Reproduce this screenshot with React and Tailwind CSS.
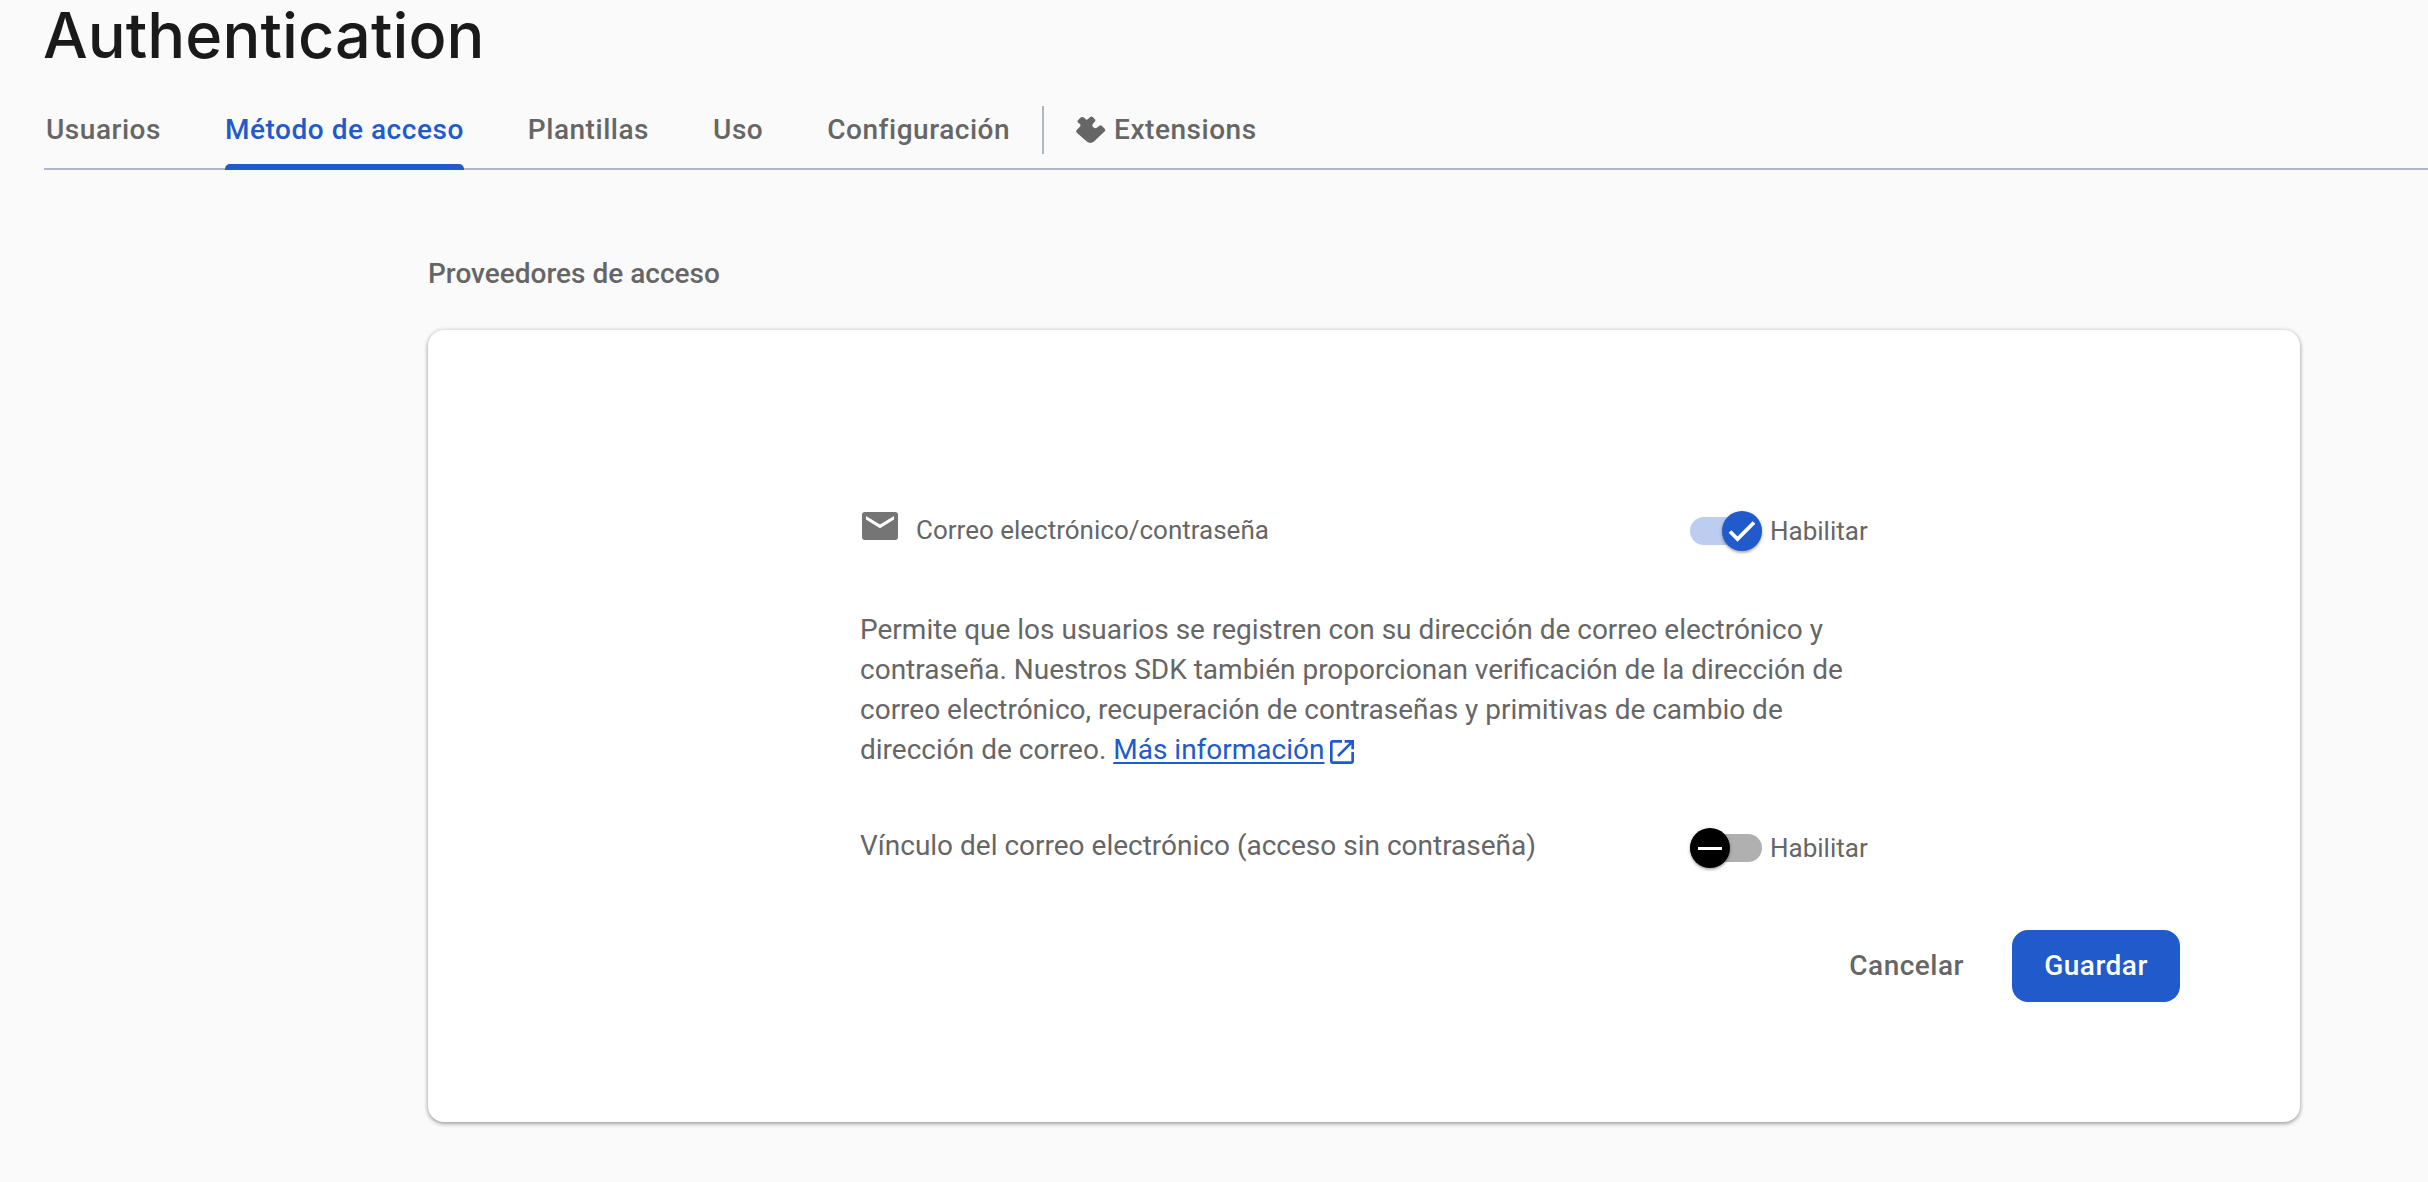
const tabs = ["Usuarios", "Método de acceso", "Plantillas", "Uso", "Configuración"];
const activeTab = "Método de acceso";

function ExtensionIcon() {
  return (
    <svg width="30" height="28" viewBox="0 0 30 28" fill="#666666" className="shrink-0" aria-hidden="true">
      <path d="M3.6 2.6 5.1 1.3Q6.6.6 7.9 1.6L10 3.6Q11 4 12 3.1L14.2.9Q15.4 0 16.6.9L18.9 3.2Q19.9 4.4 18.9 5.6L17.3 7.2Q15.8 9 16.6 10.6Q18.2 12.6 20.4 12L23.8 9.6Q25 9 26 9.9L28.7 12.7Q29.8 14 28.8 15.2L18 25.6Q14.5 28.4 10.8 25.6L.8 16.8Q-.4 15.2.8 13.8L3.4 11.2Q5.2 9.4 4.2 8.2L2 6.6Q1 5.6 1.8 4.4Z" />
    </svg>
  );
}

function MailIcon() {
  return (
    <svg width="36" height="28" viewBox="0 0 36 28" className="shrink-0" aria-hidden="true">
      <rect width="36" height="28" rx="3" fill="#757575" />
      <path d="M4 4v3.6l14 8.6 14-8.6V4l-14 8.4z" fill="#fff" />
    </svg>
  );
}

function OpenInNewIcon() {
  return (
    <svg width="32" height="32" viewBox="0 0 24 24" fill="#215acb" className="ml-0.5 inline-block align-[-9px]" aria-hidden="true">
      <path d="M5 21q-.82 0-1.41-.59T3 19V5q0-.82.59-1.41T5 3h7v2H5v14h14v-7h2v7q0 .82-.59 1.41T19 21Zm4.7-5.3-1.4-1.4L17.6 5H14V3h7v7h-2V6.4Z" />
    </svg>
  );
}

function Switch({ on }) {
  return (
    <div className="relative flex h-10 w-[72px] shrink-0 items-center">
      <div className={`h-7 w-full rounded-full ${on ? "bg-[#bccdef]" : "bg-[#b0b0b0]"}`} />
      <div
        className={`absolute top-0 flex size-10 items-center justify-center rounded-full shadow-[0_2px_2px_rgba(0,0,0,0.2),0_1px_4px_rgba(0,0,0,0.18)] ${
          on ? "right-0 bg-[#215acb]" : "left-0 bg-black"
        }`}
      >
        {on ? (
          <svg width="28" height="22" viewBox="0 0 28 22" fill="none" stroke="#fff" strokeWidth="3.8" aria-hidden="true">
            <path d="M2 11.5 9.5 19 26 2.5" />
          </svg>
        ) : (
          <div className="h-[3px] w-6 bg-white" />
        )}
      </div>
    </div>
  );
}

export default function App() {
  return (
    <div className="h-[1182px] w-[2428px] overflow-hidden bg-[#fafafa] font-[Roboto,sans-serif] text-[28px] text-[#666666]">
      <h1 className="pl-[43px] font-[Inter,sans-serif] text-[63px] leading-[70px] font-medium tracking-[0.1px] text-[#1a1a1a]">
        Authentication
      </h1>

      <nav className="mt-5 ml-11 flex h-20 items-center pl-0.5 font-medium tracking-[0.53px] shadow-[inset_0_-2px_0_#b1b5c8]">
        <div className="flex h-full gap-16">
          {tabs.map((tab) => (
            <a key={tab} className={`relative flex h-full items-center leading-10 ${tab === activeTab ? "text-[#215acb]" : ""}`}>
              {tab}
              {tab === activeTab && <span className="absolute inset-x-0 bottom-0 h-1.5 rounded-t-[5px] bg-[#215acb]" />}
            </a>
          ))}
        </div>
        <div className="ml-8 h-12 w-0.5 bg-[#b1b5c8]" />
        <a className="ml-8 flex items-center gap-2 leading-10">
          <ExtensionIcon />
          Extensions
        </a>
      </nav>

      <main className="mr-32 ml-[428px]">
        <h2 className="mt-21 leading-10 font-medium">Proveedores de acceso</h2>

        <section className="mt-9 h-[792px] rounded-2xl bg-white shadow-[0_2px_4px_rgba(0,0,0,0.3),0_0_4px_rgba(0,0,0,0.16)]">
          <div className="ml-[432px] w-[1010px] pt-[181px]">
            <div className="flex items-center text-[26px]">
              <div className="flex w-[830px] items-center gap-[18px] pl-0.5">
                <div className="-mt-2.5">
                  <MailIcon />
                </div>
                <span className="-mt-0.5">Correo electrónico/contraseña</span>
              </div>
              <Switch on />
              <span className="ml-2">Habilitar</span>
            </div>

            <p className="mt-[59px] w-[1000px] leading-10">
              Permite que los usuarios se registren con su dirección de correo electrónico y contraseña. Nuestros SDK también proporcionan
              verificación de la dirección de correo electrónico, recuperación de contraseñas y primitivas de cambio de dirección de correo.{" "}
              <a className="text-[#215acb] underline decoration-2 underline-offset-[3px]">Más información</a>
              <OpenInNewIcon />
            </p>

            <div className="mt-[58px] flex items-center">
              <span className="-mt-1 w-[830px] leading-10">Vínculo del correo electrónico (acceso sin contraseña)</span>
              <Switch />
              <span className="ml-2 text-[26px]">Habilitar</span>
            </div>
          </div>

          <div className="mt-[62px] mr-[120px] flex items-center justify-end font-medium tracking-[0.5px]">
            <button className="h-[72px] px-12">Cancelar</button>
            <button className="h-[72px] w-[168px] rounded-2xl bg-[#215acb] text-white">Guardar</button>
          </div>
        </section>
      </main>
    </div>
  );
}
